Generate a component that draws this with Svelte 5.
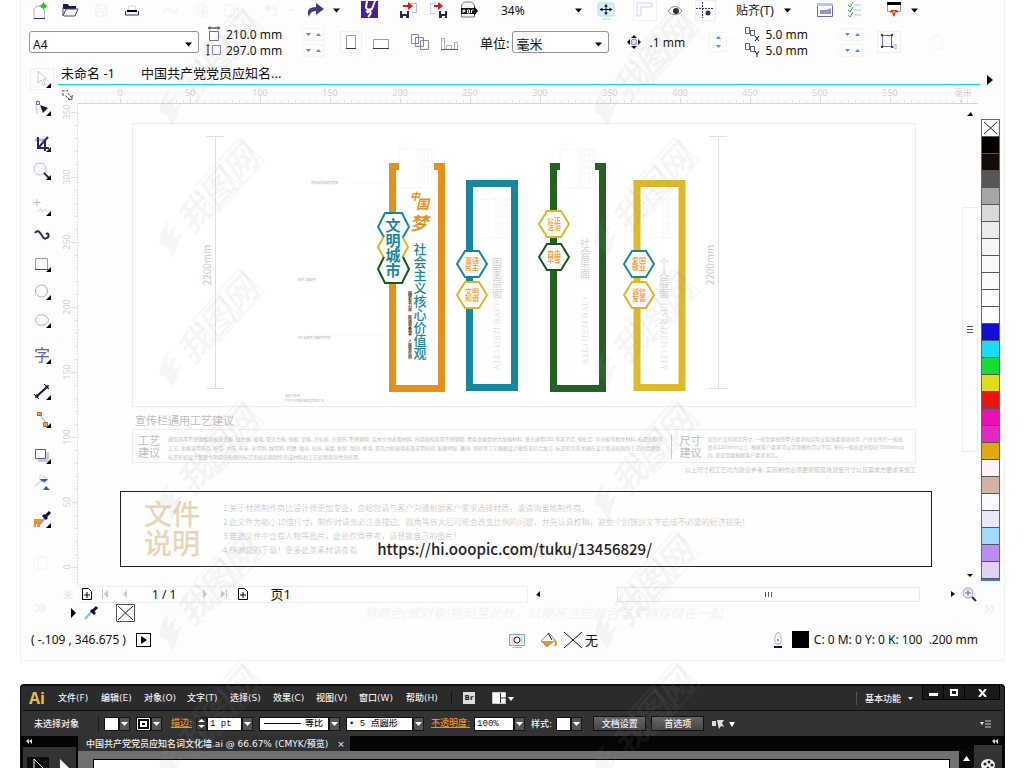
<script>
    const icons = {
        newDoc: '<path d="M7 20.5V11l3-3h4M17.5 12v8.500" fill="none" stroke="#b9b6dc"/><path d="M7 20.500h11" stroke="#35306e"/><circle cx="16.500" cy="8" r="2.500" fill="#12d21a"/><path d="M16.500 4v8M12.500 8h8" stroke="#12d21a"/>',
        open: '<path d="M5 6h5l1 2h7v3H5z" fill="#1c1950"/><path d="M5 9v9l3-7h12l-3 7H6" fill="#fafaff" stroke="#4a4688"/>',
        save: '<path d="M7 7h11v11H7zM9 7v4h7V7M9 18v-4h6v4" fill="none" stroke="#efeff3"/>',
        print: '<path d="M5.500 13v4h13v-4" fill="#f4f4fa" stroke="#35306e"/><path d="M7 13h10" stroke="#000" stroke-width="2"/><path d="M8 8h8M8.500 8v4M15.500 8v4" stroke="#ddd" fill="none"/>',
        cut: '<path d="M5 15c1-5 5-5 7-2s5 2 7-2" fill="none" stroke="#f4f4f4" stroke-width="2"/>',
        copy: '<path d="M7 6h8v10H7zM10 9h8v10h-8z" fill="none" stroke="#f2f2f2"/><path d="M12 12h4M12 14h4M12 16h4" stroke="#f2f2f2"/>',
        paste: '<path d="M6 7h9v11H6zM12 11h7v8h-7z" fill="none" stroke="#f2f2f2"/>',
        undo: '<path d="M8 10h7c5 0 4 7 0 8M11 6l-4 4 4 4" fill="none" stroke="#f2f2f2" stroke-width="2"/>',
        redo: '<path d="M5 19c-3-6 0-10 7-10V5l8 6-8 6v-4c-4 0-6 2-7 6z" fill="#403a80"/>',
        caret: '<path d="M8 10.500h7l-3.500 4z" fill="#000"/>',
        caretFaint: '<path d="M9 11h6l-3 3z" fill="#eee"/>',
        connect: '<path d="M3 3h17v17H3z" fill="#4d1d96"/><path d="M9 3l-1 6c0 2 2 3 6 2M8 14c4-3 7 0 2 5M17 3l-3 8-5 4" fill="none" stroke="#fff" stroke-width="2"/>',
        importIcon: '<path d="M14 5.500h5.500v9H15" fill="none" stroke="#bbb8dc"/><path d="M6 7h6v2H6zM11 4l5 4-5 4z" fill="#e31717"/><path d="M3 13h9v7H3z" fill="#29255f"/><path d="M5 13h5v3H5zM6 18h3v2H6z" fill="#fff"/>',
        exportIcon: '<path d="M9 5.500H3.500v10H9" fill="none" stroke="#bbb8dc" stroke-dasharray="2 1"/><path d="M7 7h5v2H7zM11 4l5 4-5 4z" fill="#e31717"/><path d="M12 13h8v7h-8z" fill="#29255f"/><path d="M14 13h4v3h-4zM15 18h3v2h-3z" fill="#fff"/>',
        pdf: '<path d="M4.500 19V7l3-3h7l3 3v12z" fill="#f5f5f5" stroke="#777"/><path d="M4 10h13V8l4 5-4 5v-2H4z" fill="#111"/><path d="M6 15v-3h2v1.500H6M10.500 12v3h2v-3zM14.500 15v-3h2" fill="none" stroke="#fff"/>',
        fit: '<rect x="4" y="5" width="16" height="13" rx="2" fill="#d8f1f8" stroke="#b9dcea"/><path d="M8 21h9" stroke="#b9dcea"/><path d="M7 11.500h10M12 7v9" stroke="#12122e"/><path d="M5.500 11.500l3-2v4zM18.500 11.500l-3-2v4zM12 6l2 2.500h-4zM12 17l2-2.500h-4z" fill="#12122e"/>',
        rulers: '<rect x="0.500" y="1.500" width="23" height="21" fill="none" stroke="#f0f0f0"/><path d="M4 18V5h15v4H8v9z" fill="#fbfbff" stroke="#d3d5ee"/>',
        eye: '<path d="M5 13c4-6 10-6 14 0-4 5-10 5-14 0z" fill="#fff" stroke="#888"/><circle cx="13" cy="13" r="3" fill="#24213c"/>',
        guides: '<rect x="2.500" y="2.500" width="20" height="20" fill="none" stroke="#eee"/><path d="M3 10.500h17M9.500 4v16" stroke="#34305e" stroke-dasharray="2 1"/><circle cx="15" cy="15" r="2.500" fill="#34305e"/>',
        welcome: '<path d="M4.500 5.500h15v13h-15z" fill="#fff" stroke="#6d6aa8"/><path d="M4 5h16v3H4z" fill="#b8c6ef"/><path d="M7 12h6l5-2v6H7z" fill="#8f95cf"/>',
        options: '<path d="M11 7h7M11 12h7M11 17h7" stroke="#bcbce0"/><path d="M5 7l2 2 3-5M5 12l2 2 3-5M5 17l2 2 3-5" fill="none" stroke="#28c22e"/>',
        launcher: '<path d="M5.500 4.500h13v9h-13z" fill="#fff" stroke="#9a98ba"/><path d="M5 4h14v3H5z" fill="#000"/><path d="M9 12h6l1 3-2-1-2 5-2-5-2 1z" fill="#e31717"/><circle cx="12" cy="14" r="1.500" fill="#ffb300"/>',
        pageW: '<path d="M7.500 9.500h9v9h-9z" fill="#fff" stroke="#6e6ba0"/><path d="M7 6h10M8 4.500L6.500 6 8 7.500M16 4.500L17.500 6 16 7.500" stroke="#111" fill="none"/>',
        pageH: '<path d="M10.500 7.500h8v9h-8z" fill="#fff" stroke="#8a88b8"/><path d="M6 7v10M4.500 8L6 6.500 7.500 8M4.500 16L6 17.500 7.500 16" stroke="#111" fill="none"/>',
        portrait: '<rect x="1.500" y="1.500" width="21" height="21" fill="none" stroke="#f0f0f0"/><path d="M7.500 5.500h9v13h-9z" fill="#fff" stroke="#9b98c8"/><path d="M7 18.500h10" stroke="#35306e"/>',
        landscape: '<path d="M4.500 9.500h15v9h-15z" fill="#fff" stroke="#9b98c8"/><path d="M4 18.500h16" stroke="#35306e"/>',
        allPages: '<path d="M3.500 4.500h7v9h-7zM7.500 7.500h8v9h-8zM12.500 10.500h8v9h-8z" fill="#fff" stroke="#8582b8"/>',
        curPage: '<path d="M3.500 8.500h3v11h-3zM8.500 15.500h5v4h-5zM16.500 12.500h3v7h-3z" fill="#fff" stroke="#a9a6d4"/><path d="M3 19.500h17" stroke="#5a5790"/>',
        nudge: '<circle cx="12" cy="12" r="3" fill="#d9d8f2" stroke="#8582b8"/><path d="M12 5l3 3H9zM12 19l3-3H9zM5 12l3-3v6zM19 12l-3-3v6z" fill="#111"/>',
        dupX: '<path d="M4.500 5.500h4v6h-4zM9.500 8.500h4v5h-4z" fill="#fff" stroke="#5d5a92"/><path d="M14 14l4 5M18 14l-4 5" stroke="#111"/>',
        dupY: '<path d="M4.500 5.500h4v6h-4zM9.500 8.500h4v5h-4z" fill="#fff" stroke="#5d5a92"/><path d="M14 13l2 3 2-3M16 16v3" stroke="#111" fill="none"/>',
        treat: '<rect x="0.500" y="1.500" width="23" height="21" fill="none" stroke="#f0f0f0"/><path d="M5 5.500h10M5 16.500h10M5.500 5v12M14.500 5v12" fill="none" stroke="#6d6aa8"/><path d="M4 4h2v2H4zM4 16h2v2H4zM14 4h2v2h-2zM14 16h2v2h-2z" fill="#35306e"/><path d="M16 17l3-3v5z" fill="#fff" stroke="#aaa8d0"/>',
        ghost: '<circle cx="12" cy="12" r="7" fill="none" stroke="#f7f7f7"/><path d="M9 6h8v12H9z" fill="none" stroke="#f5f5f5"/>',
        pick: '<rect x="0.500" y="1.500" width="23" height="21" fill="none" stroke="#f0f0f0"/><path d="M8 4v12l3-3 2 5 2-1-2-5h4z" fill="#fff" stroke="#c8c6e0"/>',
        shape: '<path d="M8 5c-4 5-1 8-1 14" fill="none" stroke="#c3c1dd"/><path d="M6.500 6.500h3v3h-3z" fill="#fff" stroke="#6d6aa8"/><path d="M10 10l8 3-5 5z" fill="#17143e"/>',
        crop: '<path d="M5 9h11" stroke="#b0b4e4" stroke-width="3" fill="none"/><path d="M8 6v11h11M15 9v11M9 16l9-10" stroke="#2a2660" stroke-width="2" fill="none"/>',
        zoom: '<circle cx="10" cy="10" r="6" fill="#fdfdff" stroke="#bab7d8"/><path d="M14 14l5 5" stroke="#2a2660" stroke-width="2"/>',
        freehand: '<path d="M7 4v7M3.500 7.500h7" stroke="#bab7ee"/><path d="M8 17c2-5 3-3 4-1s3-4 4-1 2 0 3 2" fill="none" stroke="#c8c6ea"/>',
        artistic: '<path d="M5 10c2-3 4-2 6 1s3 6 6 4 1-6-1-4" fill="none" stroke="#2a2660" stroke-width="2"/>',
        rect: '<path d="M5.500 7.500h12v11h-12z" fill="#fff" stroke="#9996cc"/><path d="M5 18.500h13" stroke="#4a4690"/>',
        ellipse: '<circle cx="11.500" cy="12" r="6" fill="#fff" stroke="#a9a6d4"/>',
        polygon: '<path d="M5 13l3-5h7l4 5-4 5H8z" fill="#fff" stroke="#b3b0da"/>',
        dimension: '<path d="M7 17L17 8" stroke="#17143e" stroke-width="2"/><path d="M4 15l5 5M14 5l5 5" stroke="#17143e"/><path d="M5 19l1-4 3 3zM19 6l-1 4-3-3z" fill="#17143e"/>',
        connector: '<path d="M10 8l7 9" stroke="#a9a6d4"/><path d="M7.500 5.500h4v3h-4zM13.500 15.500h4v4h-4z" fill="#f0b018" stroke="#c05a3c"/>',
        shadow: '<path d="M8 9h11v10H8z" fill="#c9c9ea"/><path d="M5.500 6.500h10v9h-10z" fill="#fff" stroke="#5a57a0"/>',
        fill: '<path d="M5 15l6-5" stroke="#c3c1dd"/><path d="M10 4l8 4-3 4c-3 0-5-2-5-4z" fill="#fff" stroke="#d3d1e8"/><path d="M10 8h8l-3 3c-2 0-4-1-5-3zM16 15l4 4h-7z" fill="#2d5fb4"/>',
        dropper: '<path d="M4 12h8v3h-2v5H7v-3H6v3H4z" fill="#f09418"/><path d="M9 18l6-7" stroke="#9a9cc8" stroke-width="2"/><path d="M13 8l4 4M14 11l6-6" stroke="#100e3c" stroke-width="3"/>',
        dropperSmall: '<path d="M6 18l7-8" stroke="#7cc6c6" stroke-width="2"/><path d="M12 9l4 4M13 11l5-5" stroke="#100e3c" stroke-width="3"/>',
        more: '<path d="M7 8l4 4-4 4M12 8l4 4-4 4" fill="none" stroke="#efefef" stroke-width="2"/>',
        addPage: '<path d="M7.500 6.500h6l3 3v8h-9z" fill="#fff" stroke="#000"/><path d="M9 13h6M12 10v6" stroke="#000"/>',
        first: '<path d="M8.500 7v10" stroke="#c8c8c8"/><path d="M14 8v8l-4-4z" fill="#c8c8c8"/>',
        prev: '<path d="M14 8v8l-4-4z" fill="#c8c8c8"/>',
        next: '<path d="M10 8v8l4-4z" fill="#c8c8c8"/>',
        last: '<path d="M9 8v8l4-4zM14 8h1v8h-1z" fill="#c8c8c8"/>',
        none: '<path d="M3.500 3.500h18v17h-18z" fill="#fff" stroke="#555"/><path d="M5 5l15 14M20 5L5 19" stroke="#222"/>',
        noFill: '<path d="M3 4l18 16M21 4L3 20" stroke="#111"/>',
        snap: '<path d="M5 7h3M10 7h2M6 10v4M9 13l6 5M12 10l5 6M17 12v5h-5" fill="none" stroke="#111" stroke-dasharray="3 1"/>',
        proof: '<path d="M4.500 6.500h15v11h-15z" fill="#eaf3ff" stroke="#8d9de0"/><path d="M6.500 8.500h3v7h-3z" fill="#fbd3da"/><path d="M15 8.500h3v7h-3z" fill="#c9f0d0"/><circle cx="12" cy="12" r="3" fill="#fff" stroke="#222"/><path d="M7 19.500h10" stroke="#b9b9d8"/>',
        bucket: '<path d="M5 13l8-8 6 7-8 7z" fill="#fff" stroke="#8582b8"/><path d="M5 13h13l-7 6z" fill="#e09b17"/><path d="M12 5l4 7" stroke="#111"/><path d="M18 12c3 1 2 4 1 6" stroke="#e09b17" fill="none" stroke-width="2"/>',
        pen: '<path d="M12 4c4 5 4 8 2 12h-4c-2-4-2-7 2-12z" fill="#fff" stroke="#a9a6d4"/><circle cx="12" cy="12" r="1" fill="#777"/><path d="M8 19h8" stroke="#17143e" stroke-width="2"/>',
        zoomNav: '<circle cx="11" cy="11" r="5" fill="#eef" stroke="#99c"/><path d="M8 11h6M11 8v6" stroke="#669"/><path d="M15 15l4 4" stroke="#2a2660" stroke-width="2"/>'
    };

    const tools = [
        { name: 'pick', label: '选择' },
        { name: 'shape', label: '形状' },
        { name: 'crop', label: '裁剪', sep: true },
        { name: 'zoom', label: '缩放' },
        { name: 'freehand', label: '手绘', sep: true },
        { name: 'artistic', label: '艺术笔', flat: true },
        { name: 'rect', label: '矩形' },
        { name: 'ellipse', label: '椭圆形' },
        { name: 'polygon', label: '多边形' },
        { name: 'text', label: '文本', sep: true },
        { name: 'dimension', label: '度量', sep: true },
        { name: 'connector', label: '连接器' },
        { name: 'shadow', label: '阴影', sep: true },
        { name: 'fill', label: '填充', flat: true },
        { name: 'dropper', label: '颜色滴管', sep: true }
    ];

    const palette = [
        '#000000', '#140d0c', '#5a5657', '#a5a5a6', '#d9d9da', '#ebebeb', '#f5f5f6', '#f9f9fa',
        '#fcfcfc', '#fefefe', '#ffffff', '#100fd4', '#17def5', '#14dc35', '#dedd18', '#ec1315',
        '#ea10b2', '#e727c3', '#e0a912', '#fff4f5', '#d3b2a3', '#f9f9ff', '#ece6fb', '#a3daf8',
        '#b68ff1', '#dfd2f4'
    ];

    const hexes = [
        { x: 472, y: 264, c: '#1787a0', t: ['富强', '民主'] },
        { x: 472, y: 295, c: '#deb622', t: ['文明', '和谐'] },
        { x: 554, y: 224, c: '#deb622', t: ['公正', '法治'] },
        { x: 554, y: 257, c: '#135a1a', t: ['自由', '平等'] },
        { x: 639, y: 264, c: '#1787a0', t: ['爱国', '敬业'] },
        { x: 639, y: 295, c: '#deb622', t: ['诚信', '友善'] }
    ];

    const levels = [
        { x: 497, y: 258, t: '国家层面', cy: 303 },
        { x: 585, y: 238, t: '社会层面', cy: 297 },
        { x: 664, y: 258, t: '个人层面', cy: 303 }
    ];

    const buildings = [
        [399, 140], [477, 190], [560, 140], [644, 190]
    ];

    const menus = ['文件(F)', '编辑(E)', '对象(O)', '文字(T)', '选择(S)', '效果(C)', '视图(V)', '窗口(W)', '帮助(H)'];

    const hTicks = Array.from({ length: 12 }, (_, i) => i);
    const vTicks = [350, 300, 250, 200, 150, 100, 50, 0];
    const marks = [];
    for (let x = 208; x < 1024; x += 435) {
        for (let y = 67; y < 768; y += 131) marks.push([x, y]);
    }
</script>

{#snippet icon(name)}
    <svg class="icon" width="24" height="24" viewBox="0 0 24 24" aria-hidden="true">{@html icons[name]}</svg>
{/snippet}

{#snippet btn(name, label)}
    <button class="tb" aria-label={label}>{@render icon(name)}</button>
{/snippet}

{#snippet drop(label)}
    <button class="dd" aria-label={label}>{@render icon('caret')}</button>
{/snippet}

{#snippet spin(label)}
    <span class="spin">
        <button aria-label="{label} 减小"><svg width="5" height="3"><path d="M0 0h5L2.500 3z" fill="#4a90e2" /></svg></button>
        <button aria-label="{label} 增大"><svg width="5" height="3"><path d="M0 3h5L2.500 0z" fill="#4a90e2" /></svg></button>
    </span>
{/snippet}

{#snippet aiDrop(label)}
    <button class="ai-dd" aria-label={label}><svg width="7" height="4"><path d="M0 0h7L3.500 4z" fill="#fff" /></svg></button>
{/snippet}

<div class="page">
    <section class="corel">
        <div class="toolbar">
            <div class="group g1">
                {@render btn('newDoc', '新建')}
                {@render btn('open', '打开')}
                {@render btn('save', '保存')}
                {@render btn('print', '打印')}
            </div>
            <div class="group g2">
                {@render btn('cut', '剪切')}
                {@render btn('copy', '复制')}
                {@render btn('paste', '粘贴')}
            </div>
            <div class="group g2">
                {@render btn('undo', '撤消')}
                <button class="dd" aria-label="撤消列表">{@render icon('caretFaint')}</button>
            </div>
            <div class="group g3">
                {@render btn('redo', '重做')}
                {@render drop('重做列表')}
            </div>
            <div class="group g4">{@render btn('connect', '搜索内容')}</div>
            <div class="group g2">
                {@render btn('importIcon', '导入')}
                {@render btn('exportIcon', '导出')}
                {@render btn('pdf', '发布为 PDF')}
            </div>
            <label class="pick zoom-level">
                <select aria-label="缩放级别"><option>34%</option></select>
                {@render icon('caret')}
            </label>
            {@render btn('fit', '全屏预览')}
            <div class="group g2">
                {@render btn('rulers', '显示标尺')}
                {@render btn('eye', '显示网格')}
                {@render btn('guides', '显示辅助线')}
            </div>
            <button class="snap-btn">贴齐(T) {@render icon('caret')}</button>
            <div class="group g2">
                {@render btn('welcome', '欢迎屏幕')}
                {@render btn('options', '选项')}
            </div>
            <div class="group g2">
                {@render btn('launcher', '应用程序启动器')}
                {@render drop('启动器列表')}
            </div>
        </div>

        <div class="props">
            <label class="pick boxed paper">
                <select aria-label="页面大小"><option>A4</option></select>
                {@render icon('caret')}
            </label>
            <div class="stack dims">
                <div class="field">{@render icon('pageW')}<input aria-label="页面宽度" value="210.0 mm" />{@render spin('宽度')}</div>
                <div class="field">{@render icon('pageH')}<input aria-label="页面高度" value="297.0 mm" />{@render spin('高度')}</div>
            </div>
            <div class="group g4">
                {@render btn('portrait', '纵向')}
                {@render btn('landscape', '横向')}
            </div>
            <div class="group g2">
                {@render btn('allPages', '所有页面')}
                {@render btn('curPage', '当前页')}
            </div>
            <label class="unit-label" for="unit">单位:</label>
            <span class="pick boxed unit">
                <select id="unit"><option>毫米</option></select>
                {@render icon('caret')}
            </span>
            <div class="field nudge">
                {@render btn('nudge', '微调')}
                <input aria-label="微调距离" value=".1 mm" />
                <span class="vspin">
                    <button aria-label="微调 增大"><svg width="5" height="3"><path d="M0 3h5L2.500 0z" fill="#4a90e2" /></svg></button>
                    <button aria-label="微调 减小"><svg width="5" height="3"><path d="M0 0h5L2.500 3z" fill="#4a90e2" /></svg></button>
                </span>
            </div>
            <div class="stack dup">
                <div class="field">{@render icon('dupX')}<input aria-label="再制距离 X" value="5.0 mm" />{@render spin('X')}</div>
                <div class="field">{@render icon('dupY')}<input aria-label="再制距离 Y" value="5.0 mm" />{@render spin('Y')}</div>
            </div>
            <div class="group last">
                {@render btn('treat', '视为已填充')}
                {@render btn('ghost', '快速自定义')}
            </div>
        </div>

        <div class="body">
            <nav class="tools">
                {#each tools as tool}
                    <button class="tool" class:sep={tool.sep} aria-label={tool.label}>
                        <svg width="32" height="28" viewBox="-1 -2 32 28">
                            {#if tool.name === 'text'}
                                <text x="12" y="18" text-anchor="middle" font-size="16" fill="#6562a8">字</text>
                            {:else}
                                {@html icons[tool.name]}
                            {/if}
                            {#if !tool.flat}
                                <path d="M21 16v5h-5z" fill="#000" />
                            {/if}
                        </svg>
                    </button>
                {/each}
                <button class="tool ghost" aria-label="快速自定义">{@render icon('ghost')}</button>
                <button class="tool more" aria-label="更多工具">{@render icon('more')}</button>
            </nav>

            <div class="center">
                <div class="tabs">
                    <button>未命名 -1</button>
                    <button>中国共产党党员应知名...</button>
                </div>
                <div class="ruler-row">
                    <span class="origin">{@render icon('snap')}</span>
                    <svg class="hruler" height="19" viewBox="78 85 900 19" preserveAspectRatio="xMinYMin meet">
                        <path d="M78 103.500h900" stroke="#d6d6d6" />
                        <path d="M85 101.500h890" stroke="#dcdcdc" stroke-width="2" stroke-dasharray="1 6" />
                        {#each hTicks as i}
                            <path d="M{120.5 + i * 70} 98v5" stroke="#d8d8d8" />
                            <text x={120 + i * 70} y="96" text-anchor="middle">{i * 50}</text>
                        {/each}
                        <path d="M961.500 98v5" stroke="#d8d8d8" />
                        <text x="963" y="96" text-anchor="middle">毫米</text>
                    </svg>
                </div>

                <div class="stage">
                    <svg class="vruler" width="20" height="481" viewBox="58 104 20 481">
                        <path d="M77.500 104v481" stroke="#e0e0e0" stroke-dasharray="2 1" />
                        <path d="M76 112v460" stroke="#e4e4e4" stroke-width="3" stroke-dasharray="1 12" />
                        {#each vTicks as v, i}
                            <path d="M71 {112.5 + i * 65}h6" stroke="#e0e0e0" />
                            <text transform="translate(70 {112 + i * 65}) rotate(-90)" text-anchor="middle">{v}</text>
                        {/each}
                    </svg>

                    <div class="canvas">
                        <svg class="sheet" viewBox="132 123 784 284">
                            <rect x="132.500" y="123.500" width="783" height="283" fill="#fff" stroke="#ececec" />

                            {#each [215, 718] as x}
                                <path d="M{x + 0.500} 136v253M{x - 9} 136.500h18M{x - 9} 388.500h18" stroke="#e0e0e0" />
                                <text class="size" transform="translate({x - 4} 265) rotate(-90)" text-anchor="middle">2200mm</text>
                            {/each}

                            <g class="notes">
                                <text x="311" y="184">镀锌板焊接成型烤漆</text>
                                <text x="298" y="281">亚克力雕刻字</text>
                                <text x="298" y="339">PVC或亚克力雕刻字烤漆</text>
                                <text x="285" y="397">地埋式安装</text>
                                <text x="285" y="402">户外不锈钢焊接成型烤漆工艺</text>
                                <path d="M312 335h76M350 183h36" stroke="#f7f7f7" />
                            </g>

                            {#each buildings as [x, y]}
                                <g class="building" transform="translate({x} {y})">
                                    <path d="M0 48V9L9 0l10 9v39M0 9h19M22 48V9h13v39M25 9v36M29 9v36M32 9v36M22 15h13M22 21h13M22 27h13M22 33h13M0 48h35" />
                                </g>
                            {/each}

                            <path d="M389 163h10v7h-3v215h42v-215h-4v-7h11v229h-56z" fill="#e59118" />
                            <rect x="469.500" y="183.500" width="45" height="204" fill="none" stroke="#1787a0" stroke-width="7" />
                            <path d="M550 163h10v7h-3v215h42v-215h-4v-7h11v229h-56z" fill="#226323" />
                            <rect x="637" y="183.500" width="45" height="204" fill="none" stroke="#dfba27" stroke-width="7" />

                            <path d="M385 213h17l7 14-6 10 6 10-6 11 6 11-7 14h-17l-7-14 6-11-6-11 6-10-6-10z" fill="#fff" />
                            <g fill="none" stroke-width="2">
                                <path d="M384 236l-6 11 6 11M402 236l6 11-6 11" stroke="#deb622" />
                                <path d="M384 237l-6-10 7-14h17l7 14-6 10" stroke="#1787a0" />
                                <path d="M384 257l-6 12 7 14h17l7-14-6-12" stroke="#135a1a" />
                            </g>
                            <text class="city" x="393" y="218">文明城市</text>

                            <g class="dream">
                                <text x="410" y="200" font-size="10">中</text>
                                <text x="416" y="209" font-size="13">国</text>
                                <text x="410" y="230" font-size="18">梦</text>
                            </g>
                            <text class="core" x="420" y="243">社会主义核心价值观</text>
                            <text class="creed" x="410" y="291">国家有力量　民族有希望　人民有信仰</text>

                            {#each hexes as h}
                                <path
                                    d="M{h.x - 15} {h.y}l8-13h14l8 13-8 13h-14z"
                                    fill="#fff" stroke={h.c} stroke-width="2"
                                />
                                <text class="value" y={h.y - 1}>
                                    <tspan x={h.x}>{h.t[0]}</tspan><tspan x={h.x} dy="7">{h.t[1]}</tspan>
                                </text>
                            {/each}

                            {#each levels as l}
                                <text class="level" x={l.x} y={l.y}>{l.t}</text>
                                <text class="civil" transform="translate({l.x - 3} {l.cy}) rotate(90)">CIVILIZED CITY</text>
                            {/each}
                        </svg>

                        <h2>宣传栏通用工艺建议</h2>
                        <div class="advice">
                            <h3>工艺<br />建议</h3>
                            <p class="craft">
                                通常选用不锈钢镀锌板或铝板, 钛金板, 玻璃, 亚克力板, 铜板, 铝板, 冷轧板, 大理石, 不锈钢管, 实木作为表面材料, 内部结构采用不锈钢管, 黑色金属型材为加强材料, 发光通用LED,等离子灯, 霓虹灯, 导光板等相关材料, 标识的制作工艺, 金属采用折弯, 折弯, 冲压, 车床, 水切割, 线切割, 打磨, 抛光, 拉丝, 电镀, 氧化, 蚀刻, 烤漆, 亚克力和玻璃表面采用丝印, 贴即时贴, 雕刻, 喷砂等工艺根据设计图纸来综合加工, 标识的完美关键在设计渠道和制作工艺的合理性, 标识系统设计是整个项目的和谐的标识系统后期制作完成材料和工艺起到指导性的作用
                            </p>
                            <h3 class="ruled">尺寸<br />建议</h3>
                            <p class="dimension">
                                宣传栏没有固定尺寸, 一般需要按照甲方要求和实际安装效果现场来定, 户外宣传栏一般高度在2200mm以上, 根据客户要求可以带顶棚也可以不带, 室内一般高度控制在1000mm以内, 宽度需要根据客户要求来定。
                            </p>
                        </div>
                        <p class="footnote">以上尺寸和工艺均为建议参考, 实际制作必须要按照现场测量尺寸以及需求方要求来施工</p>

                        <div class="filenote">
                            <h1>文件<br />说明</h1>
                            <ul>
                                <li>1.关于材质制作商比设计师更加专业，会给您请与客户沟通根据客户需求选择材质，或咨询当地制作商。</li>
                                <li>2.此文件为缩小10倍尺寸，制作时请务必注意描边、圆角等放大后可能会改变比例的问题，并先认真校稿，避免个别错别文字造成不必要的经济损失！</li>
                                <li>3.若此文件中含有人物等图片，此处仅供参考，请替换自己的图片！</li>
                                <li>4.感谢您的下载！更多此类素材请查看 <a href="https://hi.ooopic.com/tuku/13456829/">https://hi.ooopic.com/tuku/13456829/</a></li>
                            </ul>
                        </div>
                    </div>

                    <div class="vscroll">
                        <svg width="6" height="4"><path d="M0 4h6L4 0z" fill="#111" /></svg>
                        <span class="thumb"><i></i><i></i><i></i></span>
                        <svg width="6" height="3"><path d="M0 0h6L3 3z" fill="#111" /></svg>
                    </div>
                </div>

                <div class="pagebar">
                    <span class="unit-v">米</span>
                    <div class="pages">
                        <button aria-label="添加页">{@render icon('addPage')}</button>
                        <button aria-label="首页">{@render icon('first')}</button>
                        <button aria-label="上一页">{@render icon('prev')}</button>
                        <span class="count">1 / 1</span>
                        <button aria-label="下一页">{@render icon('next')}</button>
                        <button aria-label="末页">{@render icon('last')}</button>
                        <button aria-label="在后面添加页">{@render icon('addPage')}</button>
                        <button class="page-tab">页1</button>
                    </div>
                    <svg class="harrow" width="4" height="6"><path d="M4 0v6L0 4z" fill="#111" /></svg>
                    <span class="hthumb"><i></i><i></i><i></i></span>
                    <svg width="4" height="6"><path d="M0 0v6l4-3z" fill="#111" /></svg>
                    <button class="nav" aria-label="导航器">{@render icon('zoomNav')}</button>
                </div>

                <div class="colorbar">
                    <svg width="5" height="10"><path d="M0 0v10l5-5z" fill="#000" /></svg>
                    <button aria-label="颜色滴管">{@render icon('dropperSmall')}</button>
                    <button aria-label="无填充">{@render icon('none')}</button>
                    <em>将颜色(或对象)拖动至此处，以便将这些颜色与文档存储在一起</em>
                </div>
            </div>

            <aside class="palette">
                <svg class="expand" width="6" height="10"><path d="M0 0v10l6-5z" fill="#000" /></svg>
                <div class="swatches">
                    <button aria-label="无色"><svg width="17" height="16"><path d="M2 2l13 12M15 2L2 14" stroke="#222" /></svg></button>
                    {#each palette as c}
                        <button style="background: {c}" aria-label={c}></button>
                    {/each}
                    <span class="cutoff"></span>
                </div>
                {@render icon('more')}
            </aside>
        </div>

        <footer class="status">
            <span class="coords">( -.109 , 346.675 )</span>
            <button class="play" aria-label="状态栏选项"><svg width="6" height="8"><path d="M0 0v8l6-4z" fill="#000" /></svg></button>
            <span class="proof">{@render icon('proof')}</span>
            <span class="bucket">{@render icon('bucket')}</span>
            {@render icon('noFill')}
            <span class="none">无</span>
            <span class="pen">{@render icon('pen')}</span>
            <span class="black"></span>
            <span class="cmyk">C: 0 M: 0 Y: 0 K: 100 &nbsp;.200 mm</span>
        </footer>
    </section>

    <section class="ai">
        <header class="ai-menu">
            <strong>Ai</strong>
            <nav>
                {#each menus as m}
                    <button>{m}</button>
                {/each}
            </nav>
            <button class="bridge">Br</button>
            <button class="arrange" aria-label="排列文档">
                <svg width="22" height="12">
                    <path d="M0.500 0.500h13v11h-13z" fill="#fff" stroke="#ccc" />
                    <path d="M8.500 1v10M9 6h5" stroke="#333" />
                    <path d="M16 5h6l-3 4z" fill="#fff" />
                </svg>
            </button>
            <button class="workspace">基本功能 <svg width="5" height="3"><path d="M0 0h5L2.500 3z" fill="#fff" /></svg></button>
            <div class="winbtns">
                <button aria-label="最小化"><svg width="9" height="8"><path d="M0 4h9v3H0z" fill="#fff" /></svg></button>
                <button aria-label="最大化"><svg width="9" height="8"><path d="M1 1h6v5H1z" fill="none" stroke="#fff" stroke-width="2" /></svg></button>
                <button class="close" aria-label="关闭"><svg width="9" height="8"><path d="M1 0l7 8M8 0L1 8" stroke="#fff" stroke-width="2" /></svg></button>
            </div>
        </header>

        <div class="ai-control">
            <span class="ai-state">未选择对象</span>
            <button class="sw" aria-label="填色"></button>{@render aiDrop('填色列表')}
            <button class="sw stroke" aria-label="描边颜色">
                <svg width="15" height="14">
                    <path d="M1.500 1.500h12v11h-12z" fill="#111" stroke="#fff" />
                    <path d="M4 4h7v6H4z" fill="#fff" />
                    <path d="M6 6h3v2H6z" fill="#111" />
                </svg>
            </button>{@render aiDrop('描边颜色列表')}
            <a href="#stroke">描边:</a>
            <span class="updown">
                <svg width="7" height="9"><path d="M0 3h7L3.500 0zM0 6h7L3.500 9z" fill="#fff" /></svg>
            </span>
            <select class="weight" aria-label="描边粗细"><option>1 pt</option></select>{@render aiDrop('粗细列表')}
            <select class="profile" aria-label="变量宽度配置"><option>等比</option></select>{@render aiDrop('配置列表')}
            <select class="brush" aria-label="画笔定义"><option>•  5 点圆形</option></select>{@render aiDrop('画笔列表')}
            <a class="opacity-link" href="#opacity">不透明度:</a>
            <select class="opacity" aria-label="不透明度"><option>100%</option></select>{@render aiDrop('不透明度列表')}
            <span class="style-label">样式:</span>
            <button class="sw style" aria-label="图形样式"></button>{@render aiDrop('样式列表')}
            <button class="push first">文档设置</button>
            <button class="push">首选项</button>
            <button class="plain" aria-label="选择类似对象">
                <svg width="24" height="12">
                    <path d="M0 3h4v5H0zM5 2h7l-2 3 2 4-3-1-2 3-1-4z" fill="#ddd" />
                    <path d="M17 4h6l-3 5z" fill="#fff" />
                </svg>
            </button>
            <button class="plain flyout" aria-label="控制面板菜单">
                <svg width="11" height="8"><path d="M0 2h4L2 5z" fill="#fff" /><path d="M5 1h6M5 4h6M5 7h6" stroke="#ccc" /></svg>
            </button>
        </div>

        <div class="ai-body">
            <aside class="ai-left">
                <div class="collapse"><svg width="6" height="5"><path d="M3 0v5L0 2zM6 0v5L3 2z" fill="#ddd" /></svg></div>
                <div class="ai-tools">
                    <button class="on" aria-label="选择工具"><svg width="22" height="16"><path d="M7 2v16l9-7z" fill="#000" stroke="#fff" /></svg></button>
                    <button aria-label="直接选择工具"><svg width="22" height="16"><path d="M7 2v16l9-7z" fill="#fff" /></svg></button>
                </div>
            </aside>
            <div class="ai-doc">
                <div class="ai-tabs">
                    <span class="ai-tab">中国共产党党员应知名词文化墙.ai @ 66.67% (CMYK/预览) <button aria-label="关闭文档">×</button></span>
                </div>
                <div class="ai-view">
                    <div class="artboard"></div>
                    <div class="ai-scroll"><svg width="7" height="5"><path d="M0 5h7L3.500 0z" fill="#fff" /></svg></div>
                </div>
            </div>
            <aside class="ai-right">
                <div class="collapse"><svg width="6" height="5"><path d="M3 0v5L0 2zM6 0v5L3 2z" fill="#ddd" /></svg></div>
                <div class="ai-panel">
                    <svg width="16" height="14">
                        <ellipse cx="8" cy="8" rx="7" ry="6" fill="#eee" />
                        <circle cx="5" cy="7" r="1.500" fill="#222" /><circle cx="9" cy="5" r="1.500" fill="#222" />
                        <circle cx="12" cy="8" r="1.500" fill="#222" /><circle cx="8" cy="11" r="1.500" fill="#222" />
                    </svg>
                </div>
            </aside>
        </div>
    </section>

    <svg class="watermark" aria-hidden="true">
        {#each marks as [x, y]}
            <g transform="translate({x} {y}) rotate(-48)">
                <path d="M-66-6c12-8 18-10 24-8-5 2-9 5-12 9 5-2 9-2 13 0-6 1-10 4-13 8 4-1 8 0 11 2-10 0-15 8-26 8 5-6 6-12 3-19z" />
                <text x="-38" y="13">我图网</text>
                <path class="box" d="M-3-17h68v34H-3zM31-17v34" />
            </g>
        {/each}
    </svg>
</div>

<style>
    :global(body) {
        background: #fff;
    }

    .page {
        position: relative;
        height: 100vh;
        overflow: hidden;
        padding: 0 19px 0 20px;
        box-sizing: border-box;
        font-family: "Noto Sans", "Noto Sans CJK SC", sans-serif;
        font-size: 12px;
        color: #111;
    }

    button,
    input,
    select {
        font: inherit;
        color: inherit;
        background: none;
        border: 0;
        padding: 0;
        margin: 0;
        border-radius: 0;
        min-width: 0;
        appearance: none;
    }

    h1, h2, h3, p, ul {
        margin: 0;
        padding: 0;
        font-weight: 400;
    }

    svg {
        display: block;
        flex: none;
    }

    /* ---------- CorelDRAW window ---------- */

    .corel {
        border: 1px solid #f1f1f1;
        border-top: 0;
        background: #fdfdfd;
    }

    .toolbar,
    .props,
    .group,
    .field {
        display: flex;
        align-items: center;
    }

    .toolbar {
        height: 20px;
        padding-left: 3px;
    }

    .tb {
        display: flex;
        justify-content: center;
        align-items: center;
        flex: none;
        width: 30px;
        height: 20px;
    }

    .dd {
        display: flex;
        justify-content: center;
        width: 12px;
    }

    .g1 { gap: 1px; }
    .g2 { margin-left: 9px; }
    .g3 { margin-left: 4px; }
    .g4 { margin-left: 12px; }

    .pick {
        display: grid;
        align-items: center;
    }

    .pick select,
    .pick .icon {
        grid-area: 1 / 1;
    }

    .pick .icon {
        justify-self: end;
        pointer-events: none;
        margin-right: -4px;
    }

    .pick select {
        width: 100%;
    }

    .zoom-level {
        width: 86px;
        margin-left: 17px;
        margin-right: 4px;
    }

    .snap-btn {
        display: flex;
        align-items: center;
        gap: 2px;
        margin-left: 16px;
        margin-right: 1px;
    }

    .props {
        height: 44px;
        padding-left: 8px;
    }

    .boxed {
        height: 22px;
        box-sizing: border-box;
        border: 1px solid #929292;
        border-radius: 3px;
        background: #fff;
    }

    .boxed select {
        padding-left: 3px;
        height: 20px;
    }

    .boxed .icon {
        margin-right: -3px;
    }

    .paper { width: 170px; }

    .stack {
        display: flex;
        flex-direction: column;
    }

    .field {
        height: 16px;
    }

    .field input {
        width: 76px;
        height: 16px;
    }

    .dims { margin-left: 3px; }

    .spin {
        display: flex;
        width: 22px;
        height: 13px;
        border: 1px solid #f3f3f3;
        box-sizing: border-box;
    }

    .spin button,
    .vspin button {
        flex: 1;
        display: flex;
        align-items: center;
        justify-content: center;
    }

    .unit-label {
        font-size: 13px;
        margin-left: 15px;
        margin-right: 3px;
        white-space: nowrap;
    }

    .unit {
        width: 97px;
        font-size: 13px;
    }

    .nudge { margin-left: 10px; }

    .nudge input { width: 60px; }

    .vspin {
        display: flex;
        flex-direction: column;
        width: 18px;
        height: 20px;
        border: 1px solid #f3f3f3;
        box-sizing: border-box;
    }

    .dup { margin-left: 14px; }

    .last {
        gap: 18px;
        margin-left: 11px;
    }

    .body {
        display: flex;
        height: 560px;
    }

    .tools {
        display: flex;
        flex-direction: column;
        width: 37px;
        padding: 1px 0 2px;
        box-sizing: border-box;
    }

    .tool {
        height: 28px;
        padding-left: 8px;
    }

    .tool.sep { margin-top: 8px; }
    .tool.ghost { margin-top: 16px; }
    .tool.more { margin-top: auto; }

    .center {
        display: flex;
        flex-direction: column;
        flex: 1;
        min-width: 0;
    }

    .tabs {
        display: flex;
        gap: 26px;
        height: 20px;
        padding-left: 3px;
        border-bottom: 1px solid #00dceb;
        font-size: 13px;
        line-height: 18px;
    }

    .tabs button {
        align-self: flex-start;
    }

    .ruler-row {
        display: flex;
        height: 19px;
    }

    .origin {
        width: 20px;
        height: 19px;
    }

    .origin .icon {
        width: 20px;
        height: 20px;
    }

    .hruler {
        flex: 1;
        min-width: 0;
    }

    .hruler text,
    .vruler text {
        font-size: 9px;
        fill: #d2d2d2;
    }

    .stage {
        display: flex;
    }

    .canvas {
        flex: 1;
        min-width: 0;
        padding: 19px 45px 0 54px;
        background: #fefefe;
    }

    .sheet {
        width: 100%;
        height: auto;
    }

    .sheet text {
        font-family: "Noto Sans CJK SC", sans-serif;
    }

    .sheet .size {
        font-size: 10px;
        fill: #cacaca;
    }

    .notes text {
        font-size: 3px;
        fill: #b5b5b5;
    }

    .building path {
        fill: none;
        stroke: #f6f6f6;
    }

    .sheet .city,
    .sheet .core,
    .sheet .creed,
    .sheet .level {
        writing-mode: vertical-rl;
    }

    .sheet .city {
        font-size: 15px;
        font-weight: 700;
        fill: #1787a0;
    }

    .sheet .core {
        font-size: 13px;
        font-weight: 500;
        fill: #1787a0;
    }

    .sheet .creed {
        font-size: 4px;
        font-weight: 700;
        fill: #333;
    }

    .sheet .dream text {
        font-family: "Noto Sans CJK SC", sans-serif;
        font-style: italic;
        font-weight: 700;
        fill: #e59118;
    }

    .sheet .value {
        font-size: 7px;
        font-weight: 500;
        fill: #f0941e;
        text-anchor: middle;
    }

    .sheet .level {
        font-size: 10px;
        fill: #d2d2d2;
    }

    .sheet .civil {
        font-family: "Liberation Serif", serif;
        font-size: 9px;
        fill: #e2e2e2;
    }

    h2 {
        font-size: 11px;
        line-height: 28px;
        height: 22px;
        padding-left: 3px;
        color: #bcbcbc;
    }

    .advice {
        display: flex;
        align-items: flex-start;
        height: 34px;
        box-sizing: border-box;
        border: 1px solid #ededed;
        padding: 5px 8px 0 5px;
    }

    h3 {
        flex: none;
        font-size: 11px;
        line-height: 12px;
        color: #bcbcbc;
    }

    h3.ruled {
        border-left: 1px solid #ccc;
        padding-left: 8px;
    }

    .advice p {
        font-size: 5px;
        line-height: 9px;
        color: #bdbdbd;
    }

    .craft {
        flex: 5;
        padding: 0 4px 0 8px;
    }

    .advice .dimension {
        flex: 2;
        line-height: 8px;
        padding-left: 6px;
    }

    .footnote {
        font-size: 6px;
        line-height: 14px;
        text-align: right;
        color: #c4c4c4;
    }

    .filenote {
        display: flex;
        height: 76px;
        box-sizing: border-box;
        margin: 14px -16px 0 -12px;
        border: 1px solid #222;
        padding: 8px 0 0 23px;
    }

    h1 {
        flex: none;
        font-size: 28px;
        line-height: 29px;
        font-weight: 500;
        color: #e9d5b5;
    }

    ul {
        list-style: none;
        padding-left: 23px;
        font-size: 8px;
        font-family: "Noto Sans CJK SC", sans-serif;
        font-weight: 300;
        color: #bdbdbd;
    }

    li {
        display: flex;
        align-items: center;
        height: 14px;
        gap: 20px;
        white-space: nowrap;
    }

    li a {
        font-size: 15px;
        line-height: 14px;
        font-weight: 500;
        color: #222;
        text-decoration: none;
    }

    .vscroll {
        display: flex;
        flex-direction: column;
        align-items: center;
        justify-content: space-between;
        width: 17px;
        margin-right: 2px;
        padding: 8px 0;
        box-sizing: border-box;
    }

    .thumb {
        display: flex;
        flex-direction: column;
        align-items: center;
        justify-content: center;
        gap: 2px;
        width: 14px;
        height: 243px;
        margin-bottom: 32px;
        border: 1px solid #ececec;
    }

    .thumb i {
        width: 6px;
        height: 1px;
        background: #555;
    }

    .pagebar {
        display: flex;
        align-items: center;
        height: 18px;
    }

    .unit-v {
        width: 20px;
        font-size: 10px;
        color: #e2e2e2;
        text-align: center;
    }

    .pages {
        display: flex;
        align-items: center;
        flex: none;
        width: 450px;
        height: 17px;
        border: 1px solid #eee;
        border-left: 0;
        box-sizing: border-box;
    }

    .pages button {
        display: flex;
        justify-content: center;
        width: 18px;
        margin-right: 1px;
    }

    .pages .count {
        margin: 0 20px 0 17px;
    }

    .pages .page-tab {
        font-size: 13px;
        line-height: 16px;
        width: auto;
        margin-left: 17px;
    }

    .harrow {
        margin-left: 8px;
    }

    .hthumb {
        display: flex;
        flex: 1;
        align-items: center;
        justify-content: center;
        gap: 2px;
        height: 13px;
        margin: 0 31px 0 77px;
        border: 1px solid #e8e8e8;
    }

    .hthumb i {
        width: 1px;
        height: 5px;
        background: #555;
    }

    .nav {
        margin: 0 -1px 0 2px;
    }

    .colorbar {
        display: flex;
        align-items: center;
        height: 20px;
        padding-left: 13px;
    }

    .colorbar button {
        margin-left: 3px;
    }

    .colorbar button + button {
        margin-left: 10px;
    }

    .colorbar em {
        margin-left: 227px;
        color: #f2f2f2;
        font-size: 13px;
        line-height: 16px;
    }

    .palette {
        display: flex;
        flex-direction: column;
        align-items: center;
        width: 24px;
        box-sizing: border-box;
        padding: 11px 4px 0 0;
    }

    .swatches {
        display: flex;
        flex-direction: column;
        width: 19px;
        margin: 34px 0 16px;
        border: 1px solid #666;
        border-width: 1px 1px 0;
        box-sizing: border-box;
    }

    .swatches button {
        height: 17px;
        border-bottom: 1px solid #555;
    }

    .cutoff {
        height: 2px;
        background: #3c7bdc;
    }

    .status {
        display: flex;
        align-items: center;
        height: 36px;
        padding: 0 26px 5px 10px;
        box-sizing: border-box;
    }

    .play {
        display: flex;
        align-items: center;
        justify-content: center;
        width: 15px;
        height: 14px;
        border: 1px solid #000;
        box-sizing: border-box;
    }

    .coords { width: 105px; }
    .proof { margin-left: 354px; }
    .bucket { margin: 0 1px 0 7px; }
    .none {
        font-size: 13px;
        line-height: 16px;
    }
    .pen { margin-left: auto; }

    .black {
        width: 17px;
        height: 17px;
        margin: 0 5px 0 2px;
        background: #000;
    }

    /* ---------- Illustrator window ---------- */

    .ai {
        margin-top: 23px;
        border: 1px solid #0c0c0c;
        border-top-width: 2px;
        border-radius: 4px 4px 0 0;
        background: #2b2b2b;
        color: #f2f2f2;
        font-family: "DejaVu Sans", "Noto Sans CJK SC", sans-serif;
        font-size: 9px;
        font-weight: 500;
    }

    .ai-menu {
        display: flex;
        align-items: center;
        height: 24px;
    }

    .ai-menu strong {
        width: 29px;
        padding-left: 8px;
        font-family: "Open Sans", sans-serif;
        font-size: 16px;
        line-height: 20px;
        color: #e8bd3a;
    }

    .ai-menu nav {
        display: flex;
        padding-right: 10px;
        border-right: 1px solid #111;
    }

    .ai-menu nav button {
        width: 43px;
        text-align: left;
        white-space: nowrap;
        line-height: 12px;
    }

    .ai-menu nav button:last-child {
        width: 35px;
        margin-left: 4px;
    }

    .bridge {
        width: 12px;
        height: 12px;
        margin-left: 11px;
        background: #ddd;
        color: #222;
        font-size: 7px;
        font-weight: 700;
        line-height: 12px;
    }

    .arrange {
        margin-left: 17px;
    }

    .workspace {
        display: flex;
        align-items: center;
        gap: 7px;
        margin-left: auto;
        padding-left: 8px;
        border-left: 1px solid #555;
    }

    .winbtns {
        display: flex;
        align-self: flex-start;
        height: 13px;
        margin: 0 4px 0 9px;
        border: 1px solid #000;
        border-top: 0;
        background: #1a1a1a;
    }

    .winbtns button {
        display: flex;
        align-items: center;
        justify-content: center;
        width: 21px;
        border-right: 1px solid #000;
    }

    .winbtns .close {
        width: 34px;
        border: 0;
    }

    .ai-control {
        display: flex;
        align-items: center;
        height: 26px;
        margin: 0 2px;
        padding-left: 11px;
        border-top: 1px solid #111;
        box-sizing: border-box;
        background: #333;
    }

    .ai-state {
        width: 64px;
        margin-right: 5px;
        border-right: 1px solid #1c1c1c;
        line-height: 18px;
    }

    .ai-dd {
        display: flex;
        align-items: center;
        justify-content: center;
        flex: none;
        width: 11px;
        height: 14px;
        background: #555;
        border: 1px solid #161616;
        box-sizing: border-box;
    }

    .sw {
        flex: none;
        width: 15px;
        height: 14px;
        background: #fff;
        border: 1px solid #111;
        box-sizing: border-box;
    }

    .sw.stroke {
        margin-left: 6px;
        border: 0;
        background: #111;
    }

    .ai-control a {
        flex: none;
        margin-left: 9px;
        color: #e8951c;
        font-size: 9px;
        line-height: 13px;
        text-decoration: underline;
    }

    .updown {
        display: flex;
        align-items: center;
        justify-content: center;
        width: 11px;
        height: 14px;
        margin-left: 4px;
        border: 1px solid #161616;
        box-sizing: border-box;
    }

    .ai-control select {
        flex: none;
        height: 14px;
        background: #fff;
        color: #111;
        font-family: "Liberation Mono", "Noto Sans CJK SC", monospace;
        border: 1px solid #111;
        padding-left: 2px;
    }

    .weight { width: 35px; }

    .ai-control .profile {
        width: 70px;
        margin-left: 6px;
        padding-left: 45px;
        background: linear-gradient(#111, #111) 4px 5px / 37px 1px no-repeat #fff;
    }

    .ai-control .brush {
        width: 67px;
        margin-left: 6px;
    }

    .ai-control .opacity-link {
        margin-left: 7px;
        margin-right: 4px;
    }

    .opacity { width: 40px; }

    .style-label {
        margin: 0 4px 0 6px;
        white-space: nowrap;
    }

    .push {
        width: 53px;
        height: 15px;
        margin-left: 5px;
        background: linear-gradient(#666, #444);
        border: 1px solid #111;
        line-height: 12px;
    }

    .push.first { margin-left: 11px; }

    .plain { margin-left: 8px; }

    .flyout {
        margin-left: auto;
        margin-right: 11px;
    }

    .ai-body {
        display: flex;
        height: 60px;
        padding: 0 2px;
        background: #050505;
    }

    .ai-left { width: 53px; }

    .collapse {
        height: 9px;
        padding: 3px 0 0 3px;
        box-sizing: border-box;
    }

    .ai-tools {
        display: flex;
        gap: 4px;
        height: 60px;
        margin-top: 2px;
        padding: 10px 0 0 4px;
        background: #333;
    }

    .ai-tools button {
        height: 30px;
        display: flex;
    }

    .ai-tools .on {
        background: #0c0c0c;
    }

    .ai-doc {
        flex: 1;
        margin-left: 2px;
    }

    .ai-tabs {
        display: flex;
        height: 15px;
    }

    .ai-tab {
        display: flex;
        align-items: center;
        gap: 9px;
        padding: 0 5px 0 8px;
        background: #303030;
        white-space: nowrap;
    }

    .ai-view {
        display: flex;
        height: 60px;
        background: #707070;
    }

    .artboard {
        flex: 1;
        margin: 8px 9px 0 15px;
        border: 1px solid #000;
        background: #fff;
    }

    .ai-scroll {
        display: flex;
        justify-content: center;
        width: 15px;
        padding-top: 5px;
        background: #0a0a0a;
    }

    .ai-right { width: 28px; }

    .ai-right .collapse {
        padding-left: 18px;
    }

    .ai-panel {
        display: flex;
        justify-content: center;
        height: 60px;
        padding-top: 12px;
        background: #333;
    }

    .watermark {
        position: absolute;
        inset: 0;
        width: 100%;
        height: 100%;
        pointer-events: none;
        fill: rgba(150, 150, 150, 0.09);
    }

    .watermark text {
        font-family: "Noto Sans CJK SC", sans-serif;
        font-size: 34px;
        font-weight: 700;
        font-style: italic;
    }

    .watermark .box {
        fill: none;
        stroke: rgba(150, 150, 150, 0.08);
        stroke-width: 2;
    }
</style>
